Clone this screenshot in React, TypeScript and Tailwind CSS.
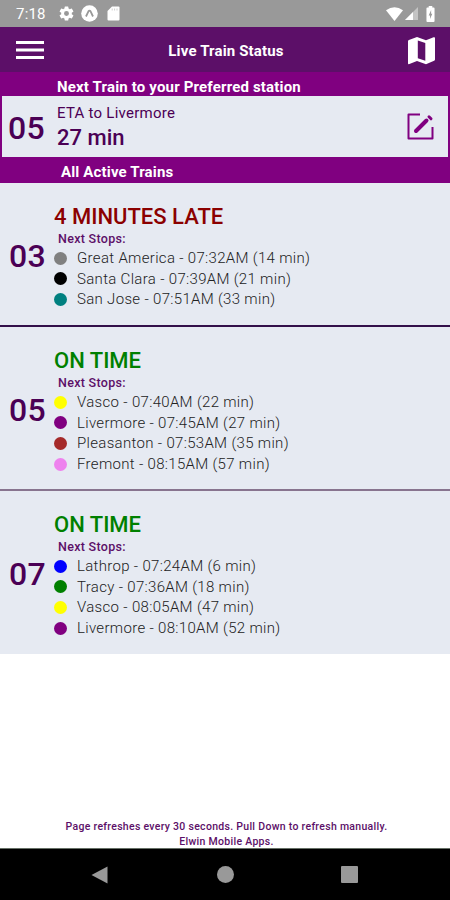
import React from "react";

type Stop = { color: string; text: string };
type Train = { id: string; status: string; tone: string; height: string; stops: Stop[] };

const trains: Train[] = [
  {
    id: "03",
    status: "4 MINUTES LATE",
    tone: "text-[#8b0000]",
    height: "h-[144px] border-b-2 border-[#33104a]",
    stops: [
      { color: "bg-[#808080]", text: "Great America - 07:32AM (14 min)" },
      { color: "bg-black", text: "Santa Clara - 07:39AM (21 min)" },
      { color: "bg-[#008080]", text: "San Jose - 07:51AM (33 min)" },
    ],
  },
  {
    id: "05",
    status: "ON TIME",
    tone: "text-[#008000]",
    height: "h-[164px] border-b-2 border-[#88748f]",
    stops: [
      { color: "bg-[#ffff00]", text: "Vasco - 07:40AM (22 min)" },
      { color: "bg-[#800080]", text: "Livermore - 07:45AM (27 min)" },
      { color: "bg-[#a52a2a]", text: "Pleasanton - 07:53AM (35 min)" },
      { color: "bg-[#ee82ee]", text: "Fremont - 08:15AM (57 min)" },
    ],
  },
  {
    id: "07",
    status: "ON TIME",
    tone: "text-[#008000]",
    height: "h-[163px]",
    stops: [
      { color: "bg-[#0000ff]", text: "Lathrop - 07:24AM (6 min)" },
      { color: "bg-[#008000]", text: "Tracy - 07:36AM (18 min)" },
      { color: "bg-[#ffff00]", text: "Vasco - 08:05AM (47 min)" },
      { color: "bg-[#800080]", text: "Livermore - 08:10AM (52 min)" },
    ],
  },
];

function StatusBar() {
  return (
    <div className="flex h-[27px] items-center bg-[#999999] pl-4 pr-[14px] text-white">
      <span className="w-[31px] pt-[1px] text-[15px] leading-none tracking-[0.2px]">7:18</span>
      <svg className="ml-[11px] h-[17px] w-[17px]" viewBox="0 0 24 24" fill="currentColor">
        <path d="M19.43 12.98c.04-.32.07-.64.07-.98s-.03-.66-.07-.98l2.11-1.65a.5.5 0 0 0 .12-.64l-2-3.46a.5.5 0 0 0-.61-.22l-2.49 1a7.3 7.3 0 0 0-1.69-.98l-.38-2.65A.49.49 0 0 0 14 2h-4a.49.49 0 0 0-.49.42l-.38 2.65c-.61.25-1.17.59-1.69.98l-2.49-1a.5.5 0 0 0-.61.22l-2 3.46a.5.5 0 0 0 .12.64l2.11 1.65c-.04.32-.07.65-.07.98s.03.66.07.98l-2.11 1.65a.5.5 0 0 0-.12.64l2 3.46c.12.22.39.3.61.22l2.49-1c.52.4 1.08.73 1.69.98l.38 2.65c.03.24.24.42.49.42h4c.25 0 .46-.18.49-.42l.38-2.65a7.3 7.3 0 0 0 1.69-.98l2.49 1c.23.09.49 0 .61-.22l2-3.46a.5.5 0 0 0-.12-.64zM12 15.500a3.500 3.500 0 1 1 0-7 3.500 3.500 0 0 1 0 7z" />
      </svg>
      <svg className="ml-[6px] h-[17px] w-[17px]" viewBox="0 0 17 17">
        <circle cx="8.500" cy="8.500" r="8.300" fill="white" />
        <path d="M5 11.500 7.400 6.400q1.100-1.500 2.200 0l2.400 5.100" fill="none" stroke="#999999" strokeWidth="1.800" />
      </svg>
      <svg className="ml-[9px] h-[15px] w-[13px]" viewBox="0 0 13 15">
        <path d="M5 .5h6.500a1 1 0 0 1 1 1v12a1 1 0 0 1-1 1h-10a1 1 0 0 1-1-1V5z" fill="white" />
        <path d="M5.200 2.500v2M7.600 2.500v2M10 2.500v2" stroke="#d0d0d0" strokeWidth="1" />
      </svg>
      <svg className="ml-auto h-[14px] w-[17px]" viewBox="0 0 17 14">
        <path d="M0 3.300Q8.500-2.700 17 3.300L8.500 14z" fill="white" />
      </svg>
      <svg className="ml-[2px] h-[13px] w-[13px]" viewBox="0 0 13 13">
        <path d="M13 0v13H0z" fill="#c4c4c4" />
        <path d="M8 5v8H0z" fill="white" />
      </svg>
      <svg className="ml-[8px] mr-[1px] h-[16px] w-[9px]" viewBox="0 0 10 16" preserveAspectRatio="none">
        <path d="M3 0h4v1.500h1.500q1 0 1 1V15q0 1-1 1h-7q-1 0-1-1V2.500q0-1 1-1H3z" fill="white" />
        <path d="M5.700 4 3 9.500h1.500V13L7 7.700H5.700z" fill="#999999" />
      </svg>
    </div>
  );
}

function Header() {
  return (
    <div className="flex h-[45px] items-center justify-between bg-[#5c0f68] pl-4 pr-[14px]">
      <svg className="mt-[1px] h-[20px] w-[28px]" viewBox="0 0 28 20" fill="white">
        <path d="M0 1h28v3H0zM0 8.500h28v3H0zM0 16h28v3H0z" />
      </svg>
      <h1 className="mt-[4px] pl-[1px] text-[15px] font-bold leading-none tracking-[0.150px] text-white">Live Train Status</h1>
      <svg className="mt-[1px] h-[29px] w-[29px]" viewBox="0 0 29 29">
        <path d="M1 5.200q0-1 .9-1.300L10 1l9 3.200 7.600-2.900Q28 .8 28 2v21.500q0 1-.9 1.300L19 28.300l-9-3.200-7.600 2.900Q1 28.500 1 27.300z" fill="white" />
        <path d="m10.800 4.400 7.500 2.600v17.800l-7.500-2.600z" fill="#5c0f68" />
      </svg>
    </div>
  );
}

function TrainCard({ train }: { train: Train }) {
  return (
    <section className={"flex items-center bg-[#e6eaf2] " + train.height}>
      <div className="w-[54px] pl-[9px] pt-[3px] text-[32px] font-medium leading-none tracking-[0.200px] text-[#4b0055]">{train.id}</div>
      <div className="self-start whitespace-nowrap pt-[20px]">
        <h2 className={"h-[27px] text-[22px] font-medium leading-[28px] " + train.tone}>{train.status}</h2>
        <p className="h-[18px] pl-[4px] text-[12.500px] font-medium leading-[18px] tracking-[0.300px] text-[#5c0f68]">Next Stops:</p>
        <ul>
          {train.stops.map((s) => (
            <li key={s.text} className="flex h-[20.600px] items-center">
              <span className={"h-[13px] w-[13px] rounded-full " + s.color} />
              <span className="ml-[10px] text-[15px] font-light tracking-[0.320px] text-[#222]">{s.text}</span>
            </li>
          ))}
        </ul>
      </div>
    </section>
  );
}

export default function App() {
  return (
    <div className="flex h-[900px] w-[450px] flex-col overflow-hidden bg-white font-[Roboto,sans-serif]">
      <StatusBar />
      <Header />
      <div className="h-[111px] bg-[#800080] px-[2px] text-white">
        <h2 className="h-[24px] pl-[55px] text-[15px] font-bold leading-[30px] tracking-[0.170px]">Next Train to your Preferred station</h2>
        <div className="flex h-[61px] items-center bg-[#e6eaf2] pr-[14px] text-[#4b0055]">
          <span className="w-[55px] pl-[6px] pt-[2px] text-[32px] font-medium leading-none tracking-[0.400px]">05</span>
          <div className="grow pt-[2px]">
            <p className="text-[15px] leading-[20px] tracking-[0.250px]">ETA to Livermore</p>
            <p className="pt-[1px] text-[22px] font-medium leading-[28px]">27 min</p>
          </div>
          <svg className="h-[27px] w-[27px]" viewBox="0 0 27 27" fill="none" stroke="#800080">
            <path d="M13 1.500H1.500v24h24V14" strokeWidth="2" strokeLinejoin="round" />
            <path d="M9 18 19.500 7.500" strokeWidth="4" strokeLinecap="round" />
            <path d="m22 3.800 2 2" strokeWidth="3" strokeLinecap="round" />
          </svg>
        </div>
        <h2 className="h-[26px] pl-[59px] text-[15px] font-bold leading-[31px] tracking-[0.150px]">All Active Trains</h2>
      </div>
      {trains.map((t) => (
        <TrainCard key={t.id} train={t} />
      ))}
      <footer className="mt-auto pl-[3px] text-center text-[10.500px] font-medium leading-[15px] tracking-[0.290px] text-[#5c0f68]">
        <p>Page refreshes every 30 seconds. Pull Down to refresh manually.</p>
        <p className="-mb-[1px]">Elwin Mobile Apps.</p>
      </footer>
      <nav className="flex h-[52px] items-center border-t border-[#667066] bg-black pl-[91px]">
        <svg className="h-[18px] w-[17px]" viewBox="0 0 17 18" fill="#999999">
          <path d="M16.500.5v17L.5 9z" />
        </svg>
        <span className="ml-[109px] h-[17px] w-[17px] rounded-full bg-[#999999]" />
        <span className="ml-[107px] h-[17px] w-[17px] rounded-[1px] bg-[#999999]" />
      </nav>
    </div>
  );
}
